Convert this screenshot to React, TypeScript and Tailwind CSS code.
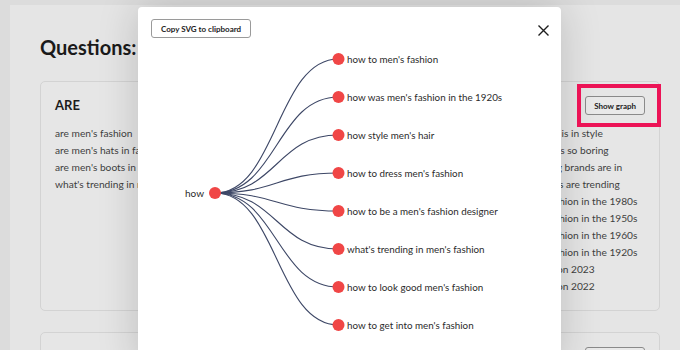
import React from 'react';

const leftItems = [
  "are men's fashion",
  "are men's hats in fashion",
  "are men's boots in fashion",
  "what's trending in men's fashion",
];

const middleItems = [
  "men's fashion are back",
  "men's fashion are in",
  "men's shoes are in style",
  "men's fashion are tight",
  "men's jeans are in style",
];

const rightItems = [
  "what men's fashion is in style",
  "why men's fashion is so boring",
  "what men's clothing brands are in",
  "what men's fashions are trending",
  "what was men's fashion in the 1980s",
  "what was men's fashion in the 1950s",
  "what was men's fashion in the 1960s",
  "what was men's fashion in the 1920s",
  "what is men's fashion 2023",
  "what is men's fashion 2022",
];

const children = [
  "how to men's fashion",
  "how was men's fashion in the 1920s",
  "how style men's hair",
  "how to dress men's fashion",
  "how to be a men's fashion designer",
  "what's trending in men's fashion",
  "how to look good men's fashion",
  "how to get into men's fashion",
];

// graph coords (svg space)
const ROOT = { x: 77, y: 155 };
const CHILD_X = 200.5;
const childY = (i: number) => 21 + i * 38;

const Graph = () => (
  <svg width="423" height="330" className="block">
    {children.map((_, i) => {
      const y = childY(i);
      const mx = (ROOT.x + CHILD_X) / 2;
      return (
        <path
          key={i}
          d={`M${ROOT.x},${ROOT.y} C${mx},${ROOT.y} ${mx},${y} ${CHILD_X},${y}`}
          fill="none"
          stroke="#3d4766"
          strokeWidth="1.1"
        />
      );
    })}
    <circle cx={ROOT.x} cy={ROOT.y} r="6" fill="#f04646" />
    <text x="66" y={ROOT.y} textAnchor="end" dominantBaseline="central" fontSize="10" fill="#2b2b2b">
      how
    </text>
    {children.map((label, i) => (
      <g key={label}>
        <circle cx={CHILD_X} cy={childY(i)} r="6" fill="#f04646" />
        <text x="209" y={childY(i)} dominantBaseline="central" fontSize="9.8" fill="#2b2b2b">
          {label}
        </text>
      </g>
    ))}
  </svg>
);

const Card = ({ title, rows }: { title: string; rows?: boolean }) => (
  <div className="rounded-[5px] border border-[#d3d3d3] bg-[#e6e6e6] px-[14px] pt-[14px] pb-[15px]">
    <div className="flex items-center justify-between h-[19px]">
      <h2 className="text-[13px] font-bold text-[#1c1c1c]">{title}</h2>
      <button className="h-[19px] px-[8px] rounded-[3px] border border-[#8a8a8a] bg-[#e9e9e9] text-[8px] font-bold text-[#222]">
        Show graph
      </button>
    </div>
    {rows && (
      <div className="mt-[10px] grid grid-cols-[210px_208px_1fr] text-[10.2px] leading-[17px] text-[#3f3f3f]">
        <ul>
          {leftItems.map((t) => (
            <li key={t} className="whitespace-nowrap">{t}</li>
          ))}
        </ul>
        <ul>
          {middleItems.map((t) => (
            <li key={t} className="whitespace-nowrap">{t}</li>
          ))}
        </ul>
        <ul>
          {rightItems.map((t) => (
            <li key={t} className="whitespace-nowrap">{t}</li>
          ))}
        </ul>
      </div>
    )}
  </div>
);

export default function App() {
  return (
    <div className="relative w-[680px] h-[350px] overflow-hidden bg-[#dcdcdc] font-[family-name:Lato,sans-serif]">
      <div className="ml-[10px] mt-[5px] h-[400px] bg-[#e5e5e5] pl-[30px] pr-[20px] pt-[30px]">
        <h1 className="text-[20px] leading-[24px] font-bold text-[#1a1a1a]">Questions:</h1>
        <div className="mt-[22px] flex flex-col gap-[21px]">
          <Card title="ARE" rows />
          <Card title="CAN" />
        </div>
      </div>

      {/* modal */}
      <div className="absolute left-[138px] top-[7px] w-[423px] h-[360px] rounded-[4px] bg-white shadow-[0_0_40px_rgba(0,0,0,0.18)]">
        <div className="flex items-start justify-between pl-[13px] pr-[12px] pt-[12px]">
          <button className="h-[19px] px-[9px] rounded-[3px] border border-[#9a9a9a] bg-white text-[8px] font-bold text-[#222]">
            Copy SVG to clipboard
          </button>
          <svg width="11" height="11" viewBox="0 0 11 11" className="mt-[6px]">
            <path d="M0.5 0.5 L10.5 10.5 M10.5 0.5 L0.5 10.5" stroke="#1e1e1e" strokeWidth="1.4" />
          </svg>
        </div>
        <Graph />
      </div>

      {/* highlight annotation */}
      <div className="absolute left-[577px] top-[84px] w-[84px] h-[43px] border-[4px] border-[#ec1356]" />
    </div>
  );
}
